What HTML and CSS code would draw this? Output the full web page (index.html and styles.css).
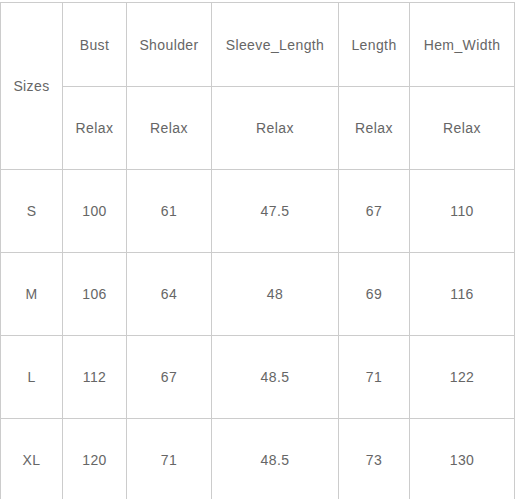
FILE: index.html
```html
<!DOCTYPE html>
<html>
<head>
<meta charset="utf-8">
<link rel="stylesheet" href="styles.css">
</head>
<body>
<table class="size-table">
  <colgroup>
    <col class="c1"><col class="c2"><col class="c3"><col class="c4"><col class="c5"><col class="c6">
  </colgroup>
  <tr class="first">
    <td rowspan="2">Sizes</td>
    <td>Bust</td><td>Shoulder</td><td>Sleeve_Length</td><td>Length</td><td>Hem_Width</td>
  </tr>
  <tr>
    <td>Relax</td><td>Relax</td><td>Relax</td><td>Relax</td><td>Relax</td>
  </tr>
  <tr><td>S</td><td>100</td><td>61</td><td>47.5</td><td>67</td><td>110</td></tr>
  <tr><td>M</td><td>106</td><td>64</td><td>48</td><td>69</td><td>116</td></tr>
  <tr><td>L</td><td>112</td><td>67</td><td>48.5</td><td>71</td><td>122</td></tr>
  <tr><td>XL</td><td>120</td><td>71</td><td>48.5</td><td>73</td><td>130</td></tr>
</table>
</body>
</html>
```
FILE: styles.css
```css
html, body {
  margin: 0;
  padding: 0;
  background: #fff;
}
body {
  padding-top: 2px;
}
.size-table {
  border-collapse: collapse;
  table-layout: fixed;
  width: 514px;
  font-family: "Liberation Sans", Arial, sans-serif;
  font-size: 14px;
  letter-spacing: 0.4px;
  color: #666;
}
.c1 { width: 62px; }
.c2 { width: 64px; }
.c3 { width: 85px; }
.c4 { width: 127px; }
.c5 { width: 71px; }
.c6 { width: 105px; }
.size-table td {
  border: 1px solid #ccc;
  padding: 0;
  text-align: center;
  vertical-align: middle;
}
.size-table tr { height: 83px; }
.size-table tr.first { height: 84px; }
```
